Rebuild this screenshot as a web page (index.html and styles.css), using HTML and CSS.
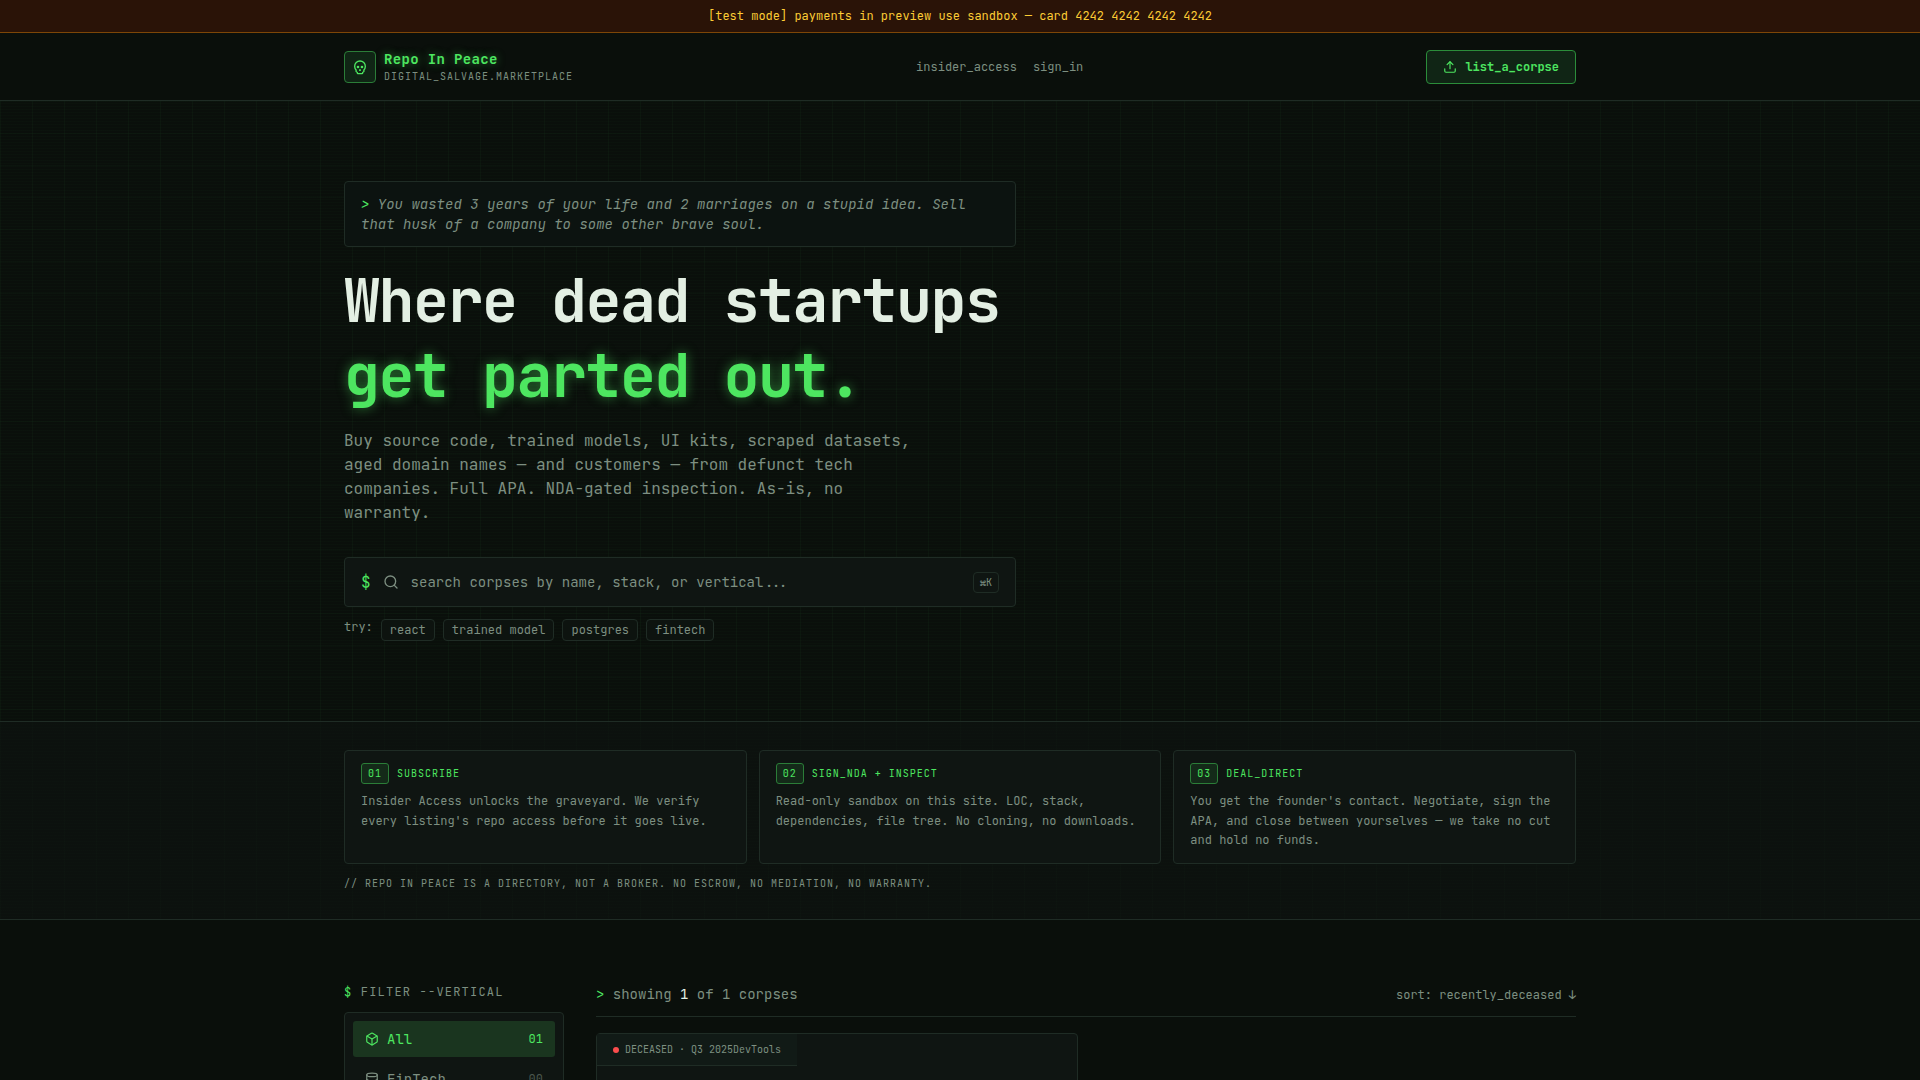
FILE: index.html
```
<!DOCTYPE html>
<html lang="en">
<head>
  <meta charset="UTF-8" />
  <title>Repo In Peace</title>
  <link rel="stylesheet" href="styles.css">
</head>
<body>

  <div class="test-banner">[test mode] payments in preview use sandbox — card 4242 4242 4242 4242</div>

  <header class="site-header">
    <div class="container header-row">
      <a class="brand">
        <span class="brand-icon">
          <svg class="icon" width="16" height="16" viewBox="0 0 24 24">
            <path d="m12.5 17-.5-1-.5 1h1z" />
            <path d="M15 22a1 1 0 0 0 1-1v-1a2 2 0 0 0 1.56-3.25 8 8 0 1 0-11.12 0A2 2 0 0 0 8 20v1a1 1 0 0 0 1 1z" />
            <circle cx="15" cy="12" r="1" />
            <circle cx="9" cy="12" r="1" />
          </svg>
        </span>
        <span class="brand-text">
          <span class="brand-name">Repo In Peace</span>
          <span class="brand-sub">DIGITAL_SALVAGE.MARKETPLACE</span>
        </span>
      </a>
      <nav class="nav">
        <a>insider_access</a>
        <a>sign_in</a>
      </nav>
      <button class="list-btn">
        <svg class="icon" width="14" height="14" viewBox="0 0 24 24">
          <path d="M12 3v12" />
          <path d="m17 8-5-5-5 5" />
          <path d="M21 15v4a2 2 0 0 1-2 2H5a2 2 0 0 1-2-2v-4" />
        </svg>
        list_a_corpse
      </button>
    </div>
  </header>

  <!-- Hero -->
  <section class="hero">
    <div class="container">
      <div class="hero-inner">
        <p class="quote"><span class="prompt">&gt;</span> You wasted 3 years of your life and 2 marriages on a stupid idea. Sell that husk of a company to some other brave soul.</p>
        <h1>Where dead startups <span class="glow">get parted out.</span></h1>
        <p class="lead">Buy source code, trained models, UI kits, scraped datasets, aged domain names — and customers — from defunct tech companies. Full APA. NDA-gated inspection. As-is, no warranty.</p>
        <div class="search">
          <span class="dollar">$</span>
          <svg class="icon" width="16" height="16" viewBox="0 0 24 24">
            <path d="m21 21-4.34-4.34" />
            <circle cx="11" cy="11" r="8" />
          </svg>
          <input type="text" placeholder="search corpses by name, stack, or vertical..." />
          <kbd>⌘K</kbd>
        </div>
        <div class="try">
          <span>try:</span>
          <a class="chip">react</a>
          <a class="chip">trained model</a>
          <a class="chip">postgres</a>
          <a class="chip">fintech</a>
        </div>
      </div>
    </div>
  </section>

  <!-- How it works -->
  <section class="steps">
    <div class="container">
      <div class="steps-grid">
        <div class="step">
          <div class="step-head"><span class="step-num">01</span>SUBSCRIBE</div>
          <p>Insider Access unlocks the graveyard. We verify every listing's repo access before it goes live.</p>
        </div>
        <div class="step">
          <div class="step-head"><span class="step-num">02</span>SIGN_NDA + INSPECT</div>
          <p>Read-only sandbox on this site. LOC, stack, dependencies, file tree. No cloning, no downloads.</p>
        </div>
        <div class="step">
          <div class="step-head"><span class="step-num">03</span>DEAL_DIRECT</div>
          <p>You get the founder's contact. Negotiate, sign the APA, and close between yourselves — we take no cut and hold no funds.</p>
        </div>
      </div>
      <p class="disclaimer">// REPO IN PEACE IS A DIRECTORY, NOT A BROKER. NO ESCROW, NO MEDIATION, NO WARRANTY.</p>
    </div>
  </section>

  <!-- Listings -->
  <main class="container listings">
    <aside>
      <h2 class="filter-title"><span class="prompt">$</span> FILTER --VERTICAL</h2>
      <div class="filters">
        <a class="filter active">
          <svg class="icon" width="14" height="14" viewBox="0 0 24 24">
            <path d="M21 8a2 2 0 0 0-1-1.73l-7-4a2 2 0 0 0-2 0l-7 4A2 2 0 0 0 3 8v8a2 2 0 0 0 1 1.73l7 4a2 2 0 0 0 2 0l7-4A2 2 0 0 0 21 16Z" />
            <path d="m3.3 7 8.7 5 8.7-5" />
            <path d="M12 22V12" />
          </svg>
          All
          <span class="count">01</span>
        </a>
        <a class="filter">
          <svg class="icon" width="14" height="14" viewBox="0 0 24 24">
            <ellipse cx="12" cy="5" rx="9" ry="3" />
            <path d="M3 5v14a9 3 0 0 0 18 0V5" />
            <path d="M3 12a9 3 0 0 0 18 0" />
          </svg>
          FinTech
          <span class="count">00</span>
        </a>
      </div>
    </aside>
    <div class="results">
      <div class="results-head">
        <div class="showing"><span class="prompt">&gt;</span> showing <b>1</b> of 1 corpses</div>
        <div class="sort">sort: recently_deceased ↓</div>
      </div>
      <div class="cards">
        <article class="card">
          <div class="card-tab"><span class="dot"></span><span>DECEASED · Q3 2025</span><span class="tag">DevTools</span></div>
        </article>
      </div>
    </div>
  </main>

</body>
</html>
```
FILE: styles.css
```
* {
  box-sizing: border-box;
  margin: 0;
  padding: 0;
}

body {
  font-family: "JetBrains Mono", "DejaVu Sans Mono", monospace;
  font-size: 16px;
  line-height: 1.5;
  background: #0a0f0b;
  color: #e3efe3;
  height: 1080px;
  overflow: hidden;
}

.container {
  width: 1232px;
  margin: 0 auto;
}

.icon {
  flex: none;
  fill: none;
  stroke: currentColor;
  stroke-width: 2;
  stroke-linecap: round;
  stroke-linejoin: round;
}

.prompt {
  color: #4de660;
}

.test-banner {
  height: 33px;
  padding-top: 8px;
  background: #2a1307;
  border-bottom: 1px solid #7d4607;
  color: #fccc35;
  font-size: 12px;
  line-height: 16px;
  text-align: center;
}

/* Header */
.site-header {
  height: 68px;
  border-bottom: 1px solid #1f2c25;
}

.header-row {
  display: flex;
  align-items: center;
  justify-content: space-between;
  height: 67px;
}

.brand {
  display: flex;
  align-items: center;
  gap: 8px;
}

.brand-icon {
  display: flex;
  align-items: center;
  justify-content: center;
  width: 32px;
  height: 32px;
  border: 1px solid #2b7d38;
  border-radius: 4px;
  background: #102515;
  color: #4de660;
}

.brand-text {
  display: flex;
  flex-direction: column;
}

.brand-name {
  color: #4de660;
  font-size: 14px;
  font-weight: 600;
  line-height: 20px;
  letter-spacing: 0.025em;
  text-shadow: 0 0 8px rgba(77, 230, 96, 0.5);
}

.brand-sub {
  color: #7d8f81;
  font-size: 10px;
  line-height: 15px;
  letter-spacing: 0.1em;
}

.nav {
  display: flex;
  gap: 16px;
  color: #7d8f81;
  font-size: 12px;
}

.list-btn {
  display: flex;
  align-items: center;
  gap: 8px;
  height: 34px;
  padding: 0 16px;
  border: 1px solid #2b8d3a;
  border-radius: 4px;
  background: #102515;
  color: #4de660;
  font: 600 12px "JetBrains Mono", "DejaVu Sans Mono", monospace;
}

/* Hero */
.hero {
  padding: 80px 0;
  border-bottom: 1px solid #1f2c25;
  background-image:
    repeating-linear-gradient(to bottom, transparent 0 2px, rgba(77, 230, 96, 0.015) 2px 3px),
    linear-gradient(to right, rgba(77, 230, 96, 0.03) 1px, transparent 1px),
    linear-gradient(to bottom, rgba(77, 230, 96, 0.025) 1px, transparent 1px);
  background-size: auto, 32px 32px, 32px 32px;
}

.hero-inner {
  width: 672px;
}

.quote {
  padding: 12px 16px;
  border: 1px solid #1f2c25;
  border-radius: 4px;
  background: #0c1310;
  color: #7d8f81;
  font-size: 14px;
  font-style: italic;
  line-height: 20px;
}

h1 {
  margin-top: 16px;
  font-size: 60px;
  font-weight: bold;
  line-height: 75px;
  letter-spacing: -0.025em;
}

.glow {
  display: block;
  color: #4de660;
  text-shadow: 0 0 12px rgba(77, 230, 96, 0.5);
}

.lead {
  width: 576px;
  margin-top: 16px;
  color: #7d8f81;
  line-height: 24px;
}

.search {
  display: flex;
  align-items: center;
  gap: 12px;
  height: 50px;
  margin-top: 32px;
  padding: 0 16px;
  border: 1px solid #1f2c25;
  border-radius: 4px;
  background: #0f1512;
  color: #7d8f81;
}

.dollar {
  padding-top: 1px;
  color: #4de660;
}

.search input {
  flex: 1;
  border: 0;
  background: none;
  font: 14px "JetBrains Mono", "DejaVu Sans Mono", monospace;
}

.search input::placeholder {
  color: #7d8f81;
}

kbd {
  width: 26px;
  border: 1px solid #1f2c25;
  border-radius: 4px;
  font: 10px/19px "JetBrains Mono", "DejaVu Sans Mono", monospace;
  text-align: center;
}

.try {
  display: flex;
  gap: 8px;
  margin-top: 12px;
  color: #7d8f81;
  font-size: 12px;
  line-height: 16px;
}

.chip {
  padding: 2px 8px;
  border: 1px solid #1f2c25;
  border-radius: 4px;
  background: #0d130f;
}

/* Steps */
.steps {
  height: 198px;
  padding-top: 28px;
  border-bottom: 1px solid #1f2c25;
  background-color: #0c110e;
  background-image:
    repeating-linear-gradient(to bottom, transparent 0 2px, rgba(77, 230, 96, 0.008) 2px 3px),
    linear-gradient(to right, rgba(77, 230, 96, 0.01) 1px, transparent 1px);
  background-size: auto, 32px 32px;
}

.steps-grid {
  display: grid;
  grid-template-columns: repeat(3, 1fr);
  gap: 12px;
}

.step {
  padding: 12px 16px;
  border: 1px solid #1f2c25;
  border-radius: 4px;
  background: #0f1512;
}

.step-head {
  display: flex;
  align-items: center;
  gap: 8px;
  color: #4de660;
  font-size: 10px;
  line-height: 15px;
  letter-spacing: 0.1em;
}

.step-num {
  padding: 2px 6px;
  border: 1px solid #2b7d38;
  border-radius: 3px;
  background: #142a19;
}

.step p {
  margin-top: 8px;
  color: #7d8f81;
  font-size: 12px;
  line-height: 19.5px;
}

.disclaimer {
  margin-top: 12px;
  color: #7d8f81;
  font-size: 10px;
  line-height: 15px;
  letter-spacing: 0.1em;
}

/* Listings */
.listings {
  display: grid;
  grid-template-columns: 220px 1fr;
  gap: 32px;
  padding-top: 64px;
}

.filter-title {
  color: #7d8f81;
  font-size: 12px;
  font-weight: normal;
  line-height: 16px;
  letter-spacing: 0.1em;
}

.filters {
  margin-top: 12px;
  padding: 8px;
  border: 1px solid #1f2c25;
  border-radius: 4px;
  background: #0f1512;
}

.filter {
  display: flex;
  align-items: center;
  gap: 8px;
  height: 36px;
  margin-bottom: 4px;
  padding: 0 12px;
  border-radius: 3px;
  color: #7d8f81;
  font-size: 14px;
}

.filter.active {
  background: #1a351f;
  color: #4de660;
}

.count {
  margin-left: auto;
  font-size: 12px;
}

.filter:not(.active) .count {
  color: #4a564d;
}

.results-head {
  display: flex;
  align-items: baseline;
  justify-content: space-between;
  padding-bottom: 12px;
  border-bottom: 1px solid #1f2c25;
  color: #7d8f81;
}

.showing {
  font-size: 14px;
  line-height: 20px;
}

.showing b {
  color: #e3efe3;
  font-weight: normal;
}

.sort {
  font-size: 12px;
  line-height: 16px;
}

.cards {
  display: grid;
  grid-template-columns: 1fr 1fr;
  gap: 16px;
  margin-top: 16px;
}

.card {
  height: 400px;
  border: 1px solid #1f2c25;
  border-radius: 4px;
  background: #0f1512;
}

.card-tab {
  display: flex;
  align-items: center;
  width: 200px;
  height: 32px;
  padding: 0 16px;
  border-bottom: 1px solid #1f2c25;
  background: #111a16;
  color: #7d8f81;
  font-size: 10px;
  white-space: nowrap;
}

.dot {
  width: 6px;
  height: 6px;
  margin-right: 6px;
  border-radius: 50%;
  background: #fb4d4d;
}
```
